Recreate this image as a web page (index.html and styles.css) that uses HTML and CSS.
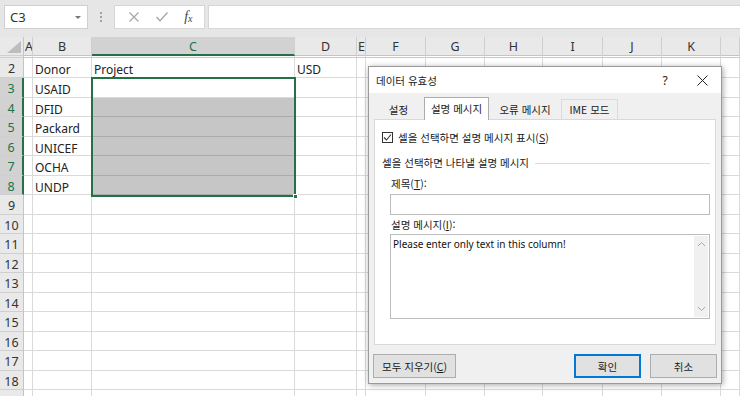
FILE: index.html
```html
<!DOCTYPE html>
<html lang="ko">
<head>
<meta charset="utf-8">
<title>Excel - 데이터 유효성</title>
<link rel="stylesheet" href="styles.css">
</head>
<body>
<div class="app">
  <div class="topbar">
    <div class="namebox"><span>C3</span><span class="nb-arrow"></span></div>
    <div class="dots"><i></i><i></i><i></i></div>
    <div class="fxbtns">
      <svg class="fx-ico" width="12" height="12" viewBox="0 0 12 12"><path d="M1.5 1.5 L10.5 10.5 M10.5 1.5 L1.5 10.5" stroke="#a6a6a6" stroke-width="1.2" fill="none"/></svg>
      <svg class="fx-ico" width="14" height="12" viewBox="0 0 14 12"><path d="M1.5 6 L5 9.8 L12.5 1.5" stroke="#a6a6a6" stroke-width="1.3" fill="none"/></svg>
      <span class="fx">f<sub>x</sub></span>
    </div>
    <div class="formula"></div>
  </div>

  <div class="sheet">
    <div class="row hdr">
      <span class="rh corner"><svg width="14" height="12" viewBox="0 0 14 12"><path d="M14 0 L14 12 L0 12 Z" fill="#bdbdbd"/></svg></span>
      <span class="ch">A</span><span class="ch">B</span><span class="ch sel">C</span><span class="ch">D</span><span class="ch">E</span><span class="ch">F</span><span class="ch">G</span><span class="ch">H</span><span class="ch">I</span><span class="ch">J</span><span class="ch">K</span><span class="ch"></span>
    </div>
    <div class="row hidden"><span class="rh"></span><span></span><span></span><span></span><span></span><span></span><span></span><span></span><span></span><span></span><span></span><span></span><span></span></div>
    <div class="row r2"><span class="rh">2</span><span></span><span>Donor</span><span>Project</span><span>USD</span><span></span><span></span><span></span><span></span><span></span><span></span><span></span><span></span></div>
    <div class="row"><span class="rh on">3</span><span></span><span>USAID</span><span></span><span></span><span></span><span></span><span></span><span></span><span></span><span></span><span></span><span></span></div>
    <div class="row"><span class="rh on">4</span><span></span><span>DFID</span><span class="fill"></span><span></span><span></span><span></span><span></span><span></span><span></span><span></span><span></span><span></span></div>
    <div class="row"><span class="rh on">5</span><span></span><span>Packard</span><span class="fill"></span><span></span><span></span><span></span><span></span><span></span><span></span><span></span><span></span><span></span></div>
    <div class="row"><span class="rh on">6</span><span></span><span>UNICEF</span><span class="fill"></span><span></span><span></span><span></span><span></span><span></span><span></span><span></span><span></span><span></span></div>
    <div class="row"><span class="rh on">7</span><span></span><span>OCHA</span><span class="fill"></span><span></span><span></span><span></span><span></span><span></span><span></span><span></span><span></span><span></span></div>
    <div class="row"><span class="rh on">8</span><span></span><span>UNDP</span><span class="fill"></span><span></span><span></span><span></span><span></span><span></span><span></span><span></span><span></span><span></span></div>
    <div class="row"><span class="rh">9</span><span></span><span></span><span></span><span></span><span></span><span></span><span></span><span></span><span></span><span></span><span></span><span></span></div>
    <div class="row"><span class="rh">10</span><span></span><span></span><span></span><span></span><span></span><span></span><span></span><span></span><span></span><span></span><span></span><span></span></div>
    <div class="row"><span class="rh">11</span><span></span><span></span><span></span><span></span><span></span><span></span><span></span><span></span><span></span><span></span><span></span><span></span></div>
    <div class="row"><span class="rh">12</span><span></span><span></span><span></span><span></span><span></span><span></span><span></span><span></span><span></span><span></span><span></span><span></span></div>
    <div class="row"><span class="rh">13</span><span></span><span></span><span></span><span></span><span></span><span></span><span></span><span></span><span></span><span></span><span></span><span></span></div>
    <div class="row"><span class="rh">14</span><span></span><span></span><span></span><span></span><span></span><span></span><span></span><span></span><span></span><span></span><span></span><span></span></div>
    <div class="row"><span class="rh">15</span><span></span><span></span><span></span><span></span><span></span><span></span><span></span><span></span><span></span><span></span><span></span><span></span></div>
    <div class="row"><span class="rh">16</span><span></span><span></span><span></span><span></span><span></span><span></span><span></span><span></span><span></span><span></span><span></span><span></span></div>
    <div class="row"><span class="rh">17</span><span></span><span></span><span></span><span></span><span></span><span></span><span></span><span></span><span></span><span></span><span></span><span></span></div>
    <div class="row"><span class="rh">18</span><span></span><span></span><span></span><span></span><span></span><span></span><span></span><span></span><span></span><span></span><span></span><span></span></div>
    <div class="row"><span class="rh"></span><span></span><span></span><span></span><span></span><span></span><span></span><span></span><span></span><span></span><span></span><span></span><span></span></div>

    <div class="selection"><span class="handle"></span></div>
  </div>

  <div class="dlg">
    <div class="dlg-title">
      <span class="dlg-name">데이터 유효성</span>
      <span class="dlg-help">?</span>
      <svg class="dlg-close" width="11" height="11" viewBox="0 0 11 11"><path d="M0.5 0.5 L10.5 10.5 M10.5 0.5 L0.5 10.5" stroke="#222" stroke-width="1" fill="none"/></svg>
    </div>
    <div class="tabs">
      <span class="tab t1">설정</span>
      <span class="tab active">설명 메시지</span>
      <span class="tab t3">오류 메시지</span>
      <span class="tab t4">IME 모드</span>
    </div>
    <div class="panel">
      <label class="chk">
        <span class="box"><svg width="9" height="9" viewBox="0 0 9 9"><path d="M1 4.5 L3.5 7 L8 1.5" stroke="#333" stroke-width="1.1" fill="none"/></svg></span>
        <span>셀을 선택하면 설명 메시지 표시(<u>S</u>)</span>
      </label>
      <div class="group"><span>셀을 선택하면 나타낼 설명 메시지</span><i></i></div>
      <div class="field-label">제목(<u>T</u>):</div>
      <div class="input"></div>
      <div class="field-label second">설명 메시지(<u>I</u>):</div>
      <div class="textarea">
        <span class="ta-text">Please enter only text in this column!</span>
        <span class="scroll">
          <svg width="9" height="6" viewBox="0 0 9 6"><path d="M1 5 L4.5 1.5 L8 5" stroke="#a8a8a8" stroke-width="1" fill="none"/></svg>
          <svg width="9" height="6" viewBox="0 0 9 6"><path d="M1 1 L4.5 4.5 L8 1" stroke="#a8a8a8" stroke-width="1" fill="none"/></svg>
        </span>
      </div>
    </div>
    <div class="footer">
      <span class="btn clear">모두 지우기(<u>C</u>)</span>
      <span class="spacer"></span>
      <span class="btn ok">확인</span>
      <span class="btn">취소</span>
    </div>
  </div>
</div>
</body>
</html>
```

FILE: styles.css
```css
* { box-sizing: border-box; }
html, body { margin: 0; padding: 0; }
body {
  width: 740px;
  height: 396px;
  overflow: hidden;
  background: #fff;
  font-family: "Noto Sans", "Liberation Sans", sans-serif;
  color: #222;
}
.app { position: relative; width: 740px; height: 396px; overflow: hidden; }

/* ---------- formula bar ---------- */
.topbar {
  height: 37px;
  background: #e6e6e6;
  display: flex;
  align-items: flex-start;
  padding: 5px 0 0 4px;
}
.namebox {
  width: 84px;
  height: 24px;
  background: #fff;
  border: 1px solid #d0d0d0;
  display: flex;
  align-items: center;
  justify-content: space-between;
  padding: 0 6px 0 5px;
  font-size: 13px;
  color: #333;
}
.nb-arrow {
  width: 0; height: 0;
  border-left: 3px solid transparent;
  border-right: 3px solid transparent;
  border-top: 3px solid #777;
}
.dots {
  width: 26px;
  height: 24px;
  display: flex;
  flex-direction: column;
  align-items: center;
  justify-content: center;
  gap: 2px;
}
.dots i { width: 2px; height: 2px; background: #a0a0a0; display: block; }
.fxbtns {
  width: 91px;
  height: 24px;
  background: #fff;
  border: 1px solid #d6d6d6;
  display: flex;
  align-items: center;
  justify-content: space-around;
  padding: 0 4px 0 6px;
}
.fx {
  font-family: "Liberation Serif", serif;
  font-style: italic;
  font-size: 14px;
  color: #444;
  line-height: 1;
}
.fx sub { font-size: 10px; vertical-align: -1px; }
.formula {
  flex: 1;
  height: 24px;
  margin-left: 3px;
  background: #fff;
  border: 1px solid #d6d6d6;
  border-right: none;
}

/* ---------- grid ---------- */
.sheet { position: relative; }
.row {
  display: grid;
  grid-template-columns: 24px 9px 59px 203px 62px 9px 60px 59px 58px 60px 59px 59px 1fr;
  height: 19.5px;
  font-size: 12px;
}
.row > span {
  border-right: 1px solid #dadada;
  border-bottom: 1px solid #dadada;
  padding-left: 2px;
  white-space: nowrap;
  overflow: hidden;
  line-height: 23px;
  color: #222;
}
.row.r2 { height: 20px; }
.row.r2 > span { line-height: 24px; }
.row.hidden { height: 2px; }
.row.hidden > span { border-bottom-color: #c8c8c8; }
.row.hdr { height: 19px; }
.row.hdr > span {
  background: #e9e9e9;
  border-right-color: #cfcfcf;
  border-bottom-color: #c4c4c4;
  text-align: center;
  padding: 0;
  line-height: 19px;
  font-size: 12.5px;
  color: #333;
}
.row.hdr > span.ch:nth-child(2), .row.hdr > span.ch:nth-child(6) { text-align: left; padding-left: 1px; }
.row.hdr > span.sel {
  background: #d2d2d2;
  color: #217346;
  border-bottom: 2px solid #217346;
}
.corner { display: flex; align-items: flex-end; justify-content: flex-end; padding: 0 2px 2px 0 !important; }
.corner svg { display: block; }
.row > span.rh {
  background: #e9e9e9;
  border-right-color: #c4c4c4;
  border-bottom-color: #cfcfcf;
  text-align: center;
  padding: 0;
  font-size: 12.5px;
  line-height: 21px;
  color: #333;
}
.row.r2 > span.rh { line-height: 22px; }
.row > span.rh.on {
  background: #d2d2d2;
  color: #217346;
  border-right: 2px solid #217346;
}
.row > span.fill {
  background: #c6c6c6;
  border-bottom-color: #ababab;
}

.selection {
  position: absolute;
  left: 91px;
  top: 40px;
  width: 205px;
  height: 120px;
  border: 2px solid #217346;
  pointer-events: none;
}
.handle {
  position: absolute;
  right: -4px;
  bottom: -4px;
  width: 5px;
  height: 5px;
  background: #217346;
  border: 1px solid #fff;
}

/* ---------- dialog ---------- */
.dlg {
  position: absolute;
  left: 368px;
  top: 66px;
  width: 354px;
  height: 318px;
  background: #f0f0f0;
  border: 1px solid #9a9a9a;
  box-shadow: 1px 1px 6px rgba(0, 0, 0, 0.35);
  font-family: "Noto Sans CJK KR", "Noto Sans", sans-serif;
  font-size: 10.5px;
  color: #1a1a1a;
  display: flex;
  flex-direction: column;
}
.dlg-title {
  height: 26px;
  background: #fff;
  display: flex;
  align-items: center;
  padding: 0 13px 0 7px;
  flex: none;
}
.dlg-name { flex: 1; font-size: 10.5px; }
.dlg-help { width: 16px; font-family: "Noto Sans", sans-serif; font-size: 12px; margin-right: 24px; text-align: center; }
.dlg-close { display: block; }

.tabs {
  display: flex;
  align-items: flex-end;
  height: 26px;
  padding: 0 0 0 4px;
  flex: none;
}
.tab {
  height: 20px;
  line-height: 19px;
  text-align: center;
  white-space: nowrap;
  border: 1px solid transparent;
  border-bottom: none;
  flex: none;
}
.tab.t1 { width: 51px; }
.tab.active {
  height: 23px;
  width: 65px;
  background: #fff;
  border: 1px solid #adadad;
  border-bottom: none;
  line-height: 21px;
  position: relative;
  top: 1px;
}
.tab.t3 { width: 72px; }
.tab.t4 { width: 57px; border: 1px solid #dcdcdc; border-bottom: none; }

.panel {
  margin: 0 5px;
  height: 226px;
  background: #fff;
  border: 1px solid #d9d9d9;
  padding: 12px 5px 0 7px;
  flex: none;
  display: flex;
  flex-direction: column;
}
.chk { display: flex; align-items: center; gap: 5px; height: 11px; line-height: 11px; }
.box {
  width: 11px; height: 11px;
  border: 1px solid #333;
  display: flex; align-items: center; justify-content: center;
  flex: none;
}
.box svg { display: block; }
.group {
  display: flex;
  align-items: center;
  gap: 6px;
  margin-top: 13px;
  height: 14px;
  line-height: 14px;
}
.group i { flex: 1; height: 1px; background: #dcdcdc; display: block; }
.field-label { margin: 7px 0 0 9px; height: 14px; line-height: 14px; }
.field-label.second { margin-top: 3px; }
.input {
  margin: 3px 0 0 8px;
  height: 21px;
  border: 1px solid #bcbcbc;
  flex: none;
}
.textarea {
  margin: 2px 0 0 8px;
  height: 85px;
  border: 1px solid #bcbcbc;
  display: flex;
  justify-content: space-between;
  flex: none;
}
.ta-text {
  font-family: "Noto Sans", "Liberation Sans", sans-serif;
  font-size: 10px;
  line-height: 14px;
  padding: 2px 0 0 2px;
  color: #111;
}
.scroll {
  width: 14px;
  margin: 1px 1px 1px 0;
  background: #f0f0f0;
  display: flex;
  flex-direction: column;
  justify-content: space-between;
  align-items: center;
  padding: 5px 0 5px;
}
.scroll svg { display: block; }

.footer {
  display: flex;
  align-items: center;
  padding: 9px 4px 0 4px;
  gap: 9px;
}
.spacer { flex: 1; }
.btn {
  height: 24px;
  width: 67px;
  background: #e1e1e1;
  border: 1px solid #adadad;
  display: flex;
  align-items: center;
  justify-content: center;
  white-space: nowrap;
}
.btn.clear { width: 83px; }
.btn.ok { border: 2px solid #0078d7; }
```
